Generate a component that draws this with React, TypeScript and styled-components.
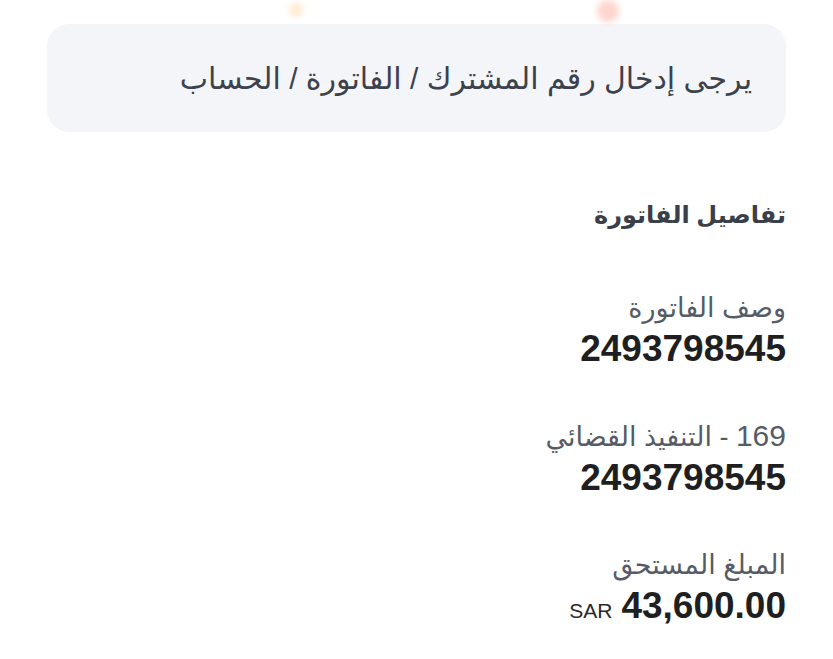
import styled, { createGlobalStyle } from 'styled-components';

const GlobalStyle = createGlobalStyle`
  body {
    margin: 0;
    background: #ffffff;
    font-family: "Liberation Sans", "DejaVu Sans", sans-serif;
  }
`;

const Page = styled.div`
  width: 833px;
  height: 659px;
  overflow: hidden;
  display: flex;
  flex-direction: column;
  box-sizing: border-box;
  padding: 0 47px;
  direction: rtl;

  & > * {
    flex-shrink: 0;
  }
`;

const DecorStrip = styled.div`
  height: 24px;
  display: flex;
  direction: ltr;
  align-items: flex-start;
`;

const Blob = styled.div<{ $color: string; $left: number; $size: number; $top: number }>`
  width: ${(p) => p.$size}px;
  height: ${(p) => p.$size}px;
  margin-left: ${(p) => p.$left}px;
  margin-top: ${(p) => p.$top}px;
  border-radius: 50%;
  background: ${(p) => p.$color};
  filter: blur(3px);
  opacity: 0.55;
`;

const Notice = styled.div`
  height: 108px;
  border-radius: 22px;
  background: #f4f5f8;
  display: flex;
  align-items: center;
  padding: 0 34px;
  font-size: 30px;
  color: #3c424d;
`;

const Details = styled.div`
  display: flex;
  flex-direction: column;
  align-items: flex-start;
  padding-top: 65px;
`;

const Heading = styled.div`
  font-size: 24px;
  font-weight: bold;
  color: #3a3f4a;
  line-height: 36px;
  margin-bottom: 56px;
`;

const Field = styled.div`
  display: flex;
  flex-direction: column;
  align-items: flex-start;
  margin-bottom: 46px;
`;

const Label = styled.div`
  font-size: 27px;
  color: #565c66;
  line-height: 38px;
`;

const LabelNumber = styled.span`
  font-size: 30px;
`;

const Value = styled.div`
  font-size: 37px;
  font-weight: bold;
  color: #1f1f22;
  line-height: 44px;
  direction: ltr;
  display: flex;
  align-items: baseline;
  gap: 9px;
`;

const Currency = styled.span`
  font-size: 21px;
  font-weight: normal;
  color: #2a2a2e;
`;

const App = () => (
  <>
    <GlobalStyle />
    <Page>
      <DecorStrip>
        <Blob $color="#ffd9a8" $left={242} $size={14} $top={3} />
        <Blob $color="#ffb3a8" $left={294} $size={22} $top={0} />
      </DecorStrip>
      <Notice>يرجى إدخال رقم المشترك / الفاتورة / الحساب</Notice>
      <Details>
        <Heading>تفاصيل الفاتورة</Heading>
        <Field>
          <Label>وصف الفاتورة</Label>
          <Value>2493798545</Value>
        </Field>
        <Field>
          <Label>
            <LabelNumber>169</LabelNumber> - التنفيذ القضائي
          </Label>
          <Value>2493798545</Value>
        </Field>
        <Field>
          <Label>المبلغ المستحق</Label>
          <Value>
            <Currency>SAR</Currency>
            43,600.00
          </Value>
        </Field>
      </Details>
    </Page>
  </>
);

export default App;
